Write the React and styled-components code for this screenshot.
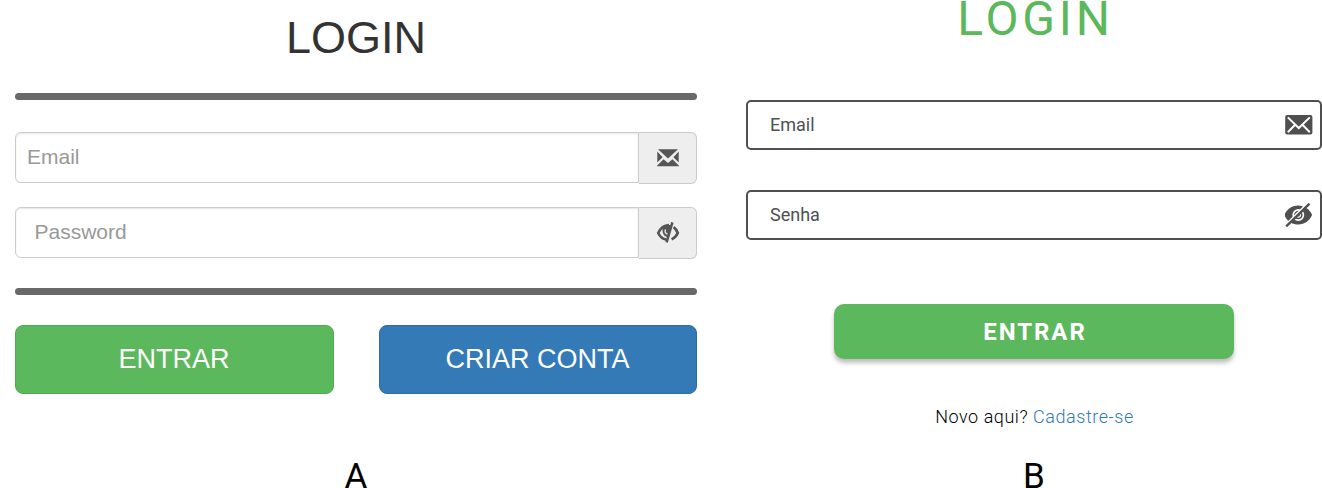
import React from 'react';
import styled, { createGlobalStyle } from 'styled-components';

const GlobalStyle = createGlobalStyle`
  *, *::before, *::after { box-sizing: border-box; }
  body { margin: 0; background: #fff; overflow: hidden; }
  button { border: 0; margin: 0; padding: 0; cursor: pointer; }
`;

const Page = styled.main`
  display: flex;
  justify-content: space-between;
  width: 1322px;
  height: 488px;
  padding-left: 15px;
`;

const Panel = styled.section`
  display: flex;
  flex-direction: column;
  & > * { flex: none; }
`;

const ClassicPanel = styled(Panel)`
  width: 682px;
  font-family: "Liberation Sans", Arial, sans-serif;
`;

const ClassicTitle = styled.h1`
  margin: 13px 0 30px;
  font-size: 45px;
  font-weight: 400;
  line-height: 50px;
  text-align: center;
  color: #333;
`;

const Rule = styled.hr`
  width: 100%;
  height: 7px;
  margin: 0;
  border: 0;
  border-radius: 4px;
  background: #696969;
`;

const ClassicFields = styled.div`
  display: flex;
  flex-direction: column;
  gap: 23px;
  margin: 32px 0 29px;
`;

const InputGroup = styled.div`
  display: flex;
  align-items: flex-start;
  height: 52px;
`;

const ClassicInput = styled.input`
  flex: 1;
  min-width: 0;
  height: 51px;
  padding: 0 0 1px ${(p) => p.$indent}px;
  border: 1px solid #ccc;
  border-radius: 6px 0 0 6px;
  box-shadow: inset 0 1px 2px rgba(0, 0, 0, 0.1);
  background: #fff;
  font: 21px "Liberation Sans", Arial, sans-serif;
  outline: 0;
  &::placeholder { color: #999; opacity: 1; }
`;

const Addon = styled.span`
  display: flex;
  align-items: center;
  justify-content: center;
  width: 58px;
  height: 52px;
  border: 1px solid #ccc;
  border-left: 0;
  border-radius: 0 6px 6px 0;
  background: #eee;
  color: #555;
`;

const ButtonRow = styled.div`
  display: grid;
  grid-template-columns: 319px 318px;
  justify-content: space-between;
  margin-top: 30px;
`;

const ClassicButton = styled.button`
  height: 69px;
  padding: 0 1px 0 0;
  border: 1px solid ${(p) => (p.$primary ? '#2e6da4' : '#4cae4c')};
  border-radius: 8px;
  background: ${(p) => (p.$primary ? '#337ab7' : '#5cb85c')};
  color: #fff;
  font: 27px "Liberation Sans", Arial, sans-serif;
`;

const Caption = styled.div`
  height: 27px;
  margin-top: ${(p) => p.$offset}px;
  color: #000;
  font: 35px/27px Roboto, sans-serif;
  text-align: center;
`;

const ModernPanel = styled(Panel)`
  align-items: center;
  width: 576px;
  font-family: Roboto, sans-serif;
`;

const ModernTitle = styled.h1`
  height: 38px;
  margin: 0 0 62px;
  padding-left: 3px;
  color: #5cb85c;
  font-size: 48px;
  font-weight: 400;
  line-height: 38px;
  letter-spacing: 3.84px;
`;

const ModernFields = styled.div`
  display: flex;
  flex-direction: column;
  gap: 40px;
  width: 100%;
`;

const OutlinedField = styled.label`
  display: flex;
  align-items: center;
  height: 50px;
  padding: 0 7px 0 22px;
  border: 2px solid #4f4f4f;
  border-radius: 5px;
  color: #4f4f4f;
`;

const ModernInput = styled.input`
  flex: 1;
  min-width: 0;
  padding: 0 0 2px;
  border: 0;
  outline: 0;
  background: transparent;
  font: 18px Roboto, sans-serif;
  &::placeholder { color: #4f4f4f; opacity: 1; }
`;

const ModernButton = styled.button`
  width: 400px;
  height: 55px;
  margin-top: 64px;
  padding-left: 2px;
  border-radius: 10px;
  box-shadow: 0 4px 4px rgba(0, 0, 0, 0.25);
  background: #5cb85c;
  color: #fff;
  font: 700 24px Roboto, sans-serif;
  letter-spacing: 1.92px;
`;

const SignUp = styled.p`
  height: 22px;
  margin: 47px 0 0;
  padding-left: 1px;
  color: #000;
  font-size: 18px;
  font-weight: 300;
  line-height: 22px;
  letter-spacing: 0.54px;
`;

const Link = styled.a`
  color: #337ab7;
  text-decoration: none;
`;

const Icon = styled.svg`
  display: block;
  flex: none;
`;

function ClassicMail() {
  return (
    <Icon width="22" height="18" viewBox="0 0 22 18" fill="currentColor">
      <path d="M1 0.2H21L11 9.6ZM0.3 2.6L5.6 8.3L0.3 13.6ZM21.7 2.6V13.6L16.4 8.3ZM6.5 10.2L11 14L15.5 10.2L22 16.7V17.3H0V16.7Z" />
    </Icon>
  );
}

function ClassicEyeOff() {
  return (
    <Icon width="24" height="22" viewBox="0 0 24 22" fill="none" stroke="currentColor">
      <path d="M13 3C7.8 3.2 4.2 6.6 2.2 11C3.8 14.5 6.5 17 10.6 17.8" strokeWidth="2.6" />
      <path d="M7 5C10 3 12 2.8 15 3.2L11.8 15.2C8 14.6 5.4 11 7 5Z" fill="currentColor" stroke="none" />
      <path d="M9.5 7.4C8.5 10 9.3 11.6 11.7 12.4" stroke="#eee" strokeWidth="1.4" />
      <path d="M16.4 0.3L10.6 20.4" strokeWidth="2.5" />
      <path d="M17.6 5.2C19.5 6.6 21 8.8 21.8 11C20.6 13.6 18.6 16 15.6 17.4" strokeWidth="2.7" />
    </Icon>
  );
}

function ModernMail() {
  return (
    <Icon width="28" height="20" viewBox="0 0 28 20">
      <rect x="0.2" y="0" width="27.2" height="19.6" rx="2" fill="currentColor" />
      <path d="M2.8 2.4L13.8 13L24.8 2.4M2.8 17.2L10.1 9.8M24.8 17.2L17.5 9.8" fill="none" stroke="#fff" strokeWidth="2" />
    </Icon>
  );
}

function ModernEyeOff() {
  return (
    <Icon width="28" height="24" viewBox="0 0 28 24">
      <path d="M-0.7 12C2 6.1 7 2.6 13 2.6S24.5 6.1 27.1 12C24.5 17.9 19.5 21.5 13.3 21.5S2 17.9 -0.7 12Z" fill="currentColor" />
      <circle cx="13.3" cy="12" r="5.1" fill="none" stroke="#fff" strokeWidth="1.7" />
      <circle cx="13.3" cy="12" r="2.1" fill="none" stroke="#fff" strokeWidth="1.2" />
      <path d="M0.7 22.2L22.8 0.2" stroke="#fff" strokeWidth="2.2" />
      <path d="M1.2 23.4L24.5 0.7" stroke="currentColor" strokeWidth="2.4" />
    </Icon>
  );
}

export default function App() {
  return (
    <>
      <GlobalStyle />
      <Page>
        <ClassicPanel>
          <ClassicTitle>LOGIN</ClassicTitle>
          <Rule />
          <ClassicFields>
            <InputGroup>
              <ClassicInput $indent={11} placeholder="Email" />
              <Addon><ClassicMail /></Addon>
            </InputGroup>
            <InputGroup>
              <ClassicInput $indent={18.5} type="password" placeholder="Password" />
              <Addon><ClassicEyeOff /></Addon>
            </InputGroup>
          </ClassicFields>
          <Rule />
          <ButtonRow>
            <ClassicButton>ENTRAR</ClassicButton>
            <ClassicButton $primary>CRIAR CONTA</ClassicButton>
          </ButtonRow>
          <Caption $offset={69}>A</Caption>
        </ClassicPanel>
        <ModernPanel>
          <ModernTitle>LOGIN</ModernTitle>
          <ModernFields>
            <OutlinedField>
              <ModernInput placeholder="Email" />
              <ModernMail />
            </OutlinedField>
            <OutlinedField>
              <ModernInput type="password" placeholder="Senha" />
              <ModernEyeOff />
            </OutlinedField>
          </ModernFields>
          <ModernButton>ENTRAR</ModernButton>
          <SignUp>
            Novo aqui? <Link href="#">Cadastre-se</Link>
          </SignUp>
          <Caption $offset={35}>B</Caption>
        </ModernPanel>
      </Page>
    </>
  );
}
